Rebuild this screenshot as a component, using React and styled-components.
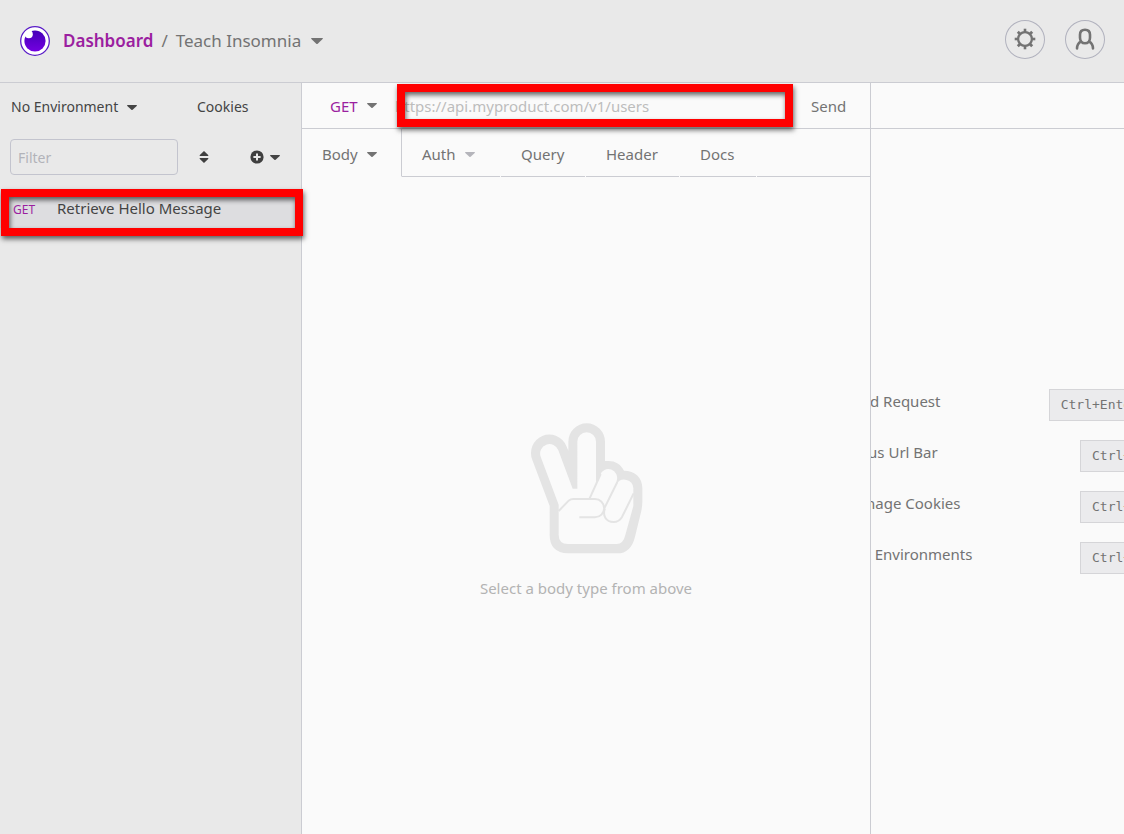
import React from "react";
import styled, { createGlobalStyle, css } from "styled-components";

const line = "#cbccd2";
const violet = "#9b1fa0";

const GlobalStyle = createGlobalStyle`
  *, *::before, *::after { box-sizing: border-box; }
  html, body, #root { height: 100%; }
  body {
    margin: 0;
    overflow: hidden;
    background: #fafafa;
    color: #737373;
    font-family: "Noto Sans", "Open Sans", sans-serif;
    font-size: 15px;
    line-height: 20px;
  }
  button, input { font: inherit; color: inherit; }
  button { padding: 0; border: 0; background: none; white-space: nowrap; text-align: left; }
`;

const Page = styled.div`
  display: flex;
  flex-direction: column;
  height: 100%;
`;

const Header = styled.header`
  display: flex;
  flex: none;
  align-items: center;
  height: 83px;
  padding: 0 19px 0 20px;
  background: #e9e9e9;
  border-bottom: 1px solid ${line};
`;

const Crumbs = styled.nav`
  display: flex;
  align-items: center;
  gap: 8px;
  margin-left: 13px;
  font-size: 17px;
  line-height: 24px;
`;

const HomeLink = styled.a`
  color: ${violet};
  font-weight: 600;
  text-decoration: none;
`;

const CrumbButton = styled.button`
  display: flex;
  align-items: center;
  gap: 10px;
`;

const HeaderActions = styled.div`
  display: flex;
  gap: 20px;
  margin-left: auto;
  padding-bottom: 4px;
`;

const RoundButton = styled.button`
  display: grid;
  place-items: center;
  width: 40px;
  height: 39px;
  border: 1px solid #b1b2be;
  border-radius: 50%;
`;

const Columns = styled.div`
  display: grid;
  flex: 1;
  grid-template-columns: 302px minmax(0, 569fr) minmax(0, 253fr);
  min-height: 0;
`;

const Sidebar = styled.aside`
  background: #e9e9e9;
  border-right: 1px solid ${line};
  color: #444;
`;

const SidebarTop = styled.div`
  display: flex;
  align-items: center;
  height: 48px;
  padding: 0 11px;
  font-size: 14px;
`;

const PickerButton = styled.button`
  display: flex;
  align-items: center;
  gap: 9px;
  width: ${(p) => p.$width}px;
  color: ${(p) => p.$color || "inherit"};
`;

const FilterRow = styled.div`
  display: flex;
  align-items: center;
  height: 54px;
  padding: 0 21px 2px 10px;
`;

const FilterInput = styled.input`
  width: 168px;
  height: 36px;
  padding: 0 7px;
  border: 1px solid #c3c4ce;
  border-radius: 4px;
  background: transparent;
  outline: 0;
  font-size: 14px;
  &::placeholder { color: #b2b3b9; opacity: 1; }
`;

const SortButton = styled.button`
  display: grid;
  margin-left: 21px;
`;

const CreateButton = styled.button`
  display: flex;
  align-items: center;
  gap: 6px;
  margin-left: auto;
`;

const marked = css`
  position: relative;
  &::after {
    content: "";
    position: absolute;
    border: 8px solid #ff0000;
    box-shadow: 1px 3px 5px rgba(0, 0, 0, 0.6), inset 1px 3px 5px rgba(0, 0, 0, 0.6);
    pointer-events: none;
    z-index: 2;
  }
`;

const RequestList = styled.ul`
  margin: 0;
  padding: 5px 0 0;
  list-style: none;
`;

const RequestItem = styled.li`
  ${marked}
  background: #dddde0;
  &::after { inset: -1px -2px -8px 1px; }
`;

const RequestButton = styled.button`
  display: flex;
  align-items: baseline;
  width: 100%;
  height: 38px;
  padding: 8px 13px;
`;

const Method = styled.span`
  width: 44px;
  color: ${violet};
  font-size: 12px;
`;

const RequestPane = styled.main`
  display: flex;
  flex-direction: column;
  min-width: 0;
  border-right: 1px solid ${line};
`;

const UrlBar = styled.form`
  display: flex;
  flex: none;
  height: 46px;
  padding-left: 28px;
  border-bottom: 1px solid ${line};
`;

const UrlField = styled.div`
  ${marked}
  flex: 1;
  min-width: 0;
  &::after { inset: 1px 0 1px 2px; }
`;

const UrlInput = styled.input`
  width: 100%;
  height: 100%;
  padding: 0;
  border: 0;
  background: transparent;
  outline: 0;
  &::placeholder { color: #bdbdbd; opacity: 1; }
`;

const SendButton = styled.button`
  width: 77px;
  padding-left: 18px;
`;

const Tabs = styled.div`
  display: flex;
  flex: none;
  height: 48px;
`;

const Tab = styled.button`
  display: flex;
  align-items: center;
  gap: 9px;
  width: ${(p) => p.$width}px;
  margin-right: 1px;
  padding: 3px 0 0 20px;
  border-bottom: 1px solid ${line};

  ${(p) => p.$active && css`
    margin-right: 0;
    border-right: 1px solid ${line};
    border-bottom-color: transparent;
  `}
`;

const TabFill = styled.div`
  flex: 1;
  border-bottom: 1px solid ${line};
`;

const EmptyBody = styled.section`
  display: flex;
  flex: 1;
  flex-direction: column;
  align-items: center;
  justify-content: center;
  gap: 23px;
  padding-top: 8px;
  color: #b3b3b3;
  p { margin: 0; }
`;

const ResponsePane = styled.section`
  display: flex;
  flex-direction: column;
  min-width: 0;
  overflow: hidden;
`;

const ResponseBar = styled.div`
  flex: none;
  height: 46px;
  border-bottom: 1px solid ${line};
`;

const Hints = styled.div`
  display: flex;
  flex: 1;
  align-items: center;
  justify-content: center;
`;

const HintTable = styled.table`
  flex: none;
  width: 307px;
  border-collapse: collapse;
  tr { height: 51px; }
  th { padding: 0 0 8px; font-weight: 400; text-align: left; white-space: nowrap; }
  td { padding: 0; text-align: right; }
`;

const Key = styled.kbd`
  display: inline-block;
  height: 32px;
  padding: 0 11px;
  border: 1px solid #d5d5d8;
  background: #ebebed;
  font-family: "DejaVu Sans Mono", monospace;
  font-size: 13px;
  line-height: 30px;
`;

const hints = [
  ["Send Request", "Ctrl+Enter"],
  ["Focus Url Bar", "Ctrl+L"],
  ["Manage Cookies", "Ctrl+K"],
  ["Edit Environments", "Ctrl+E"],
];

const Caret = ({ size = 10, color = "currentColor" }) => (
  <svg width={size} height={size / 2} viewBox="0 0 10 5" fill={color} aria-hidden="true">
    <path d="M.6 0h8.8q.9.2.3.9L5.6 4.8q-.6.4-1.2 0L.3.9Q-.3.2.6 0Z" />
  </svg>
);

const Logo = () => (
  <svg width="30" height="30" viewBox="0 0 30 30" role="img" aria-label="Insomnia">
    <defs>
      <linearGradient id="iris" x1="0" y1="0" x2="0" y2="1">
        <stop offset="0" stopColor="#4400b8" />
        <stop offset="1" stopColor="#7400e1" />
      </linearGradient>
    </defs>
    <circle cx="15" cy="15" r="14.3" fill="#fff" stroke="#5a1cc8" strokeWidth="1.3" />
    <circle cx="15" cy="15" r="10.6" fill="url(#iris)" />
    <circle cx="8.8" cy="8.2" r="4" fill="#fff" />
  </svg>
);

const Gear = () => (
  <svg width="24" height="24" viewBox="-12 -12 24 24" fill="none" stroke="#737373" aria-hidden="true">
    <circle r="6.9" strokeWidth="2.3" />
    {[0, 90, 180, 270].map((a) => (
      <path key={a} d="M0-7V-10.3" strokeWidth="2.6" transform={`rotate(${a})`} />
    ))}
    {[45, 135, 225, 315].map((a) => (
      <path key={a} d="M0-7V-10.2" strokeWidth="2.8" transform={`rotate(${a})`} />
    ))}
  </svg>
);

const Person = () => (
  <svg width="24" height="24" viewBox="-12 -12 24 24" fill="none" stroke="#737373" strokeWidth="2.6" strokeLinecap="round" aria-hidden="true">
    <path d="M-5-4.2C-5-7.5-3-9.3 0-9.3S5-7.5 5-4.2V-1.2C5 2.1 3 4.3 0 4.3S-5 2.1-5-1.2Z" />
    <path d="M-4.2 2.6C-6.8 4-7.9 6.4-8 9.4M4.2 2.6C6.8 4 7.9 6.4 8 9.4" />
  </svg>
);

const SortIcon = () => (
  <svg width="10" height="12" viewBox="0 0 10 12" fill="#3f3f3f" aria-hidden="true">
    <path d="M5 0 9.4 4.2Q9.6 5 8.8 5H1.2Q.4 5 .6 4.2ZM5 12 .6 7.8Q.4 7 1.2 7H8.8Q9.6 7 9.4 7.8Z" />
  </svg>
);

const PlusCircle = () => (
  <svg width="14" height="14" viewBox="0 0 14 14" aria-hidden="true">
    <circle cx="7" cy="7" r="6.6" fill="#3f3f3f" />
    <path d="M7 3.4v7.2M3.4 7h7.2" stroke="#e9e9e9" strokeWidth="2" />
  </svg>
);

const Hand = () => (
  <svg width="117" height="133" viewBox="84 66 351 399" aria-hidden="true">
    <path
      fill="#e4e4e4"
      d="M149 404V318L97 180A55 55 0 0 1 199 138L205 152V125A55 55 0 0 1 315 125V183H325C347 183 362 193 372 212C405 212 427 232 427 265V305Q427 320 423 337L405 410Q393 460 352 460H204Q149 458 149 404Z"
    />
    <path
      fill="#fafafa"
      d="M176 404V314L122 170A28 28 0 0 1 175 151L218 266H232V125A28 28 0 0 1 288 125V249L300 225A26 26 0 0 1 350 242L350 252A27 27 0 0 1 400 264V318L376 405Q370 432 350 432H204Q176 432 176 404Z"
    />
    <path
      fill="none"
      stroke="#e4e4e4"
      strokeWidth="6"
      d="M302 222 269 295M352 246 314 323M176 333 206 302Q212 297 220 297H285A27.500 27.500 0 0 1 285 352H238M315 325C307 345 317 366 341 366Q357 366 366 351L401 280"
    />
  </svg>
);

export default function App() {
  return (
    <Page>
      <GlobalStyle />
      <Header>
        <Logo />
        <Crumbs aria-label="Breadcrumb">
          <HomeLink href="#dashboard">Dashboard</HomeLink>
          <span>/</span>
          <CrumbButton type="button">
            Teach Insomnia
            <Caret size={12} />
          </CrumbButton>
        </Crumbs>
        <HeaderActions>
          <RoundButton type="button" aria-label="Preferences"><Gear /></RoundButton>
          <RoundButton type="button" aria-label="Account"><Person /></RoundButton>
        </HeaderActions>
      </Header>
      <Columns>
        <Sidebar>
          <SidebarTop>
            <PickerButton type="button" $width={186}>
              No Environment
              <Caret />
            </PickerButton>
            <button type="button">Cookies</button>
          </SidebarTop>
          <FilterRow>
            <FilterInput type="text" placeholder="Filter" aria-label="Filter" />
            <SortButton type="button" aria-label="Sort"><SortIcon /></SortButton>
            <CreateButton type="button" aria-label="Create">
              <PlusCircle />
              <Caret />
            </CreateButton>
          </FilterRow>
          <RequestList>
            <RequestItem>
              <RequestButton type="button">
                <Method>GET</Method>
                Retrieve Hello Message
              </RequestButton>
            </RequestItem>
          </RequestList>
        </Sidebar>
        <RequestPane>
          <UrlBar>
            <PickerButton type="button" $width={65} $color={violet}>
              GET
              <Caret color="#737373" />
            </PickerButton>
            <UrlField>
              <UrlInput type="text" placeholder="https://api.myproduct.com/v1/users" aria-label="Request URL" />
            </UrlField>
            <SendButton type="button">Send</SendButton>
          </UrlBar>
          <Tabs>
            <Tab type="button" $width={100} $active>Body <Caret /></Tab>
            <Tab type="button" $width={98}>Auth <Caret color="#b5b5bb" /></Tab>
            <Tab type="button" $width={84}>Query</Tab>
            <Tab type="button" $width={93}>Header</Tab>
            <Tab type="button" $width={76}>Docs</Tab>
            <TabFill />
          </Tabs>
          <EmptyBody>
            <Hand />
            <p>Select a body type from above</p>
          </EmptyBody>
        </RequestPane>
        <ResponsePane>
          <ResponseBar />
          <Hints>
            <HintTable>
              <tbody>
                {hints.map(([label, keys]) => (
                  <tr key={label}>
                    <th scope="row">{label}</th>
                    <td><Key>{keys}</Key></td>
                  </tr>
                ))}
              </tbody>
            </HintTable>
          </Hints>
        </ResponsePane>
      </Columns>
    </Page>
  );
}
